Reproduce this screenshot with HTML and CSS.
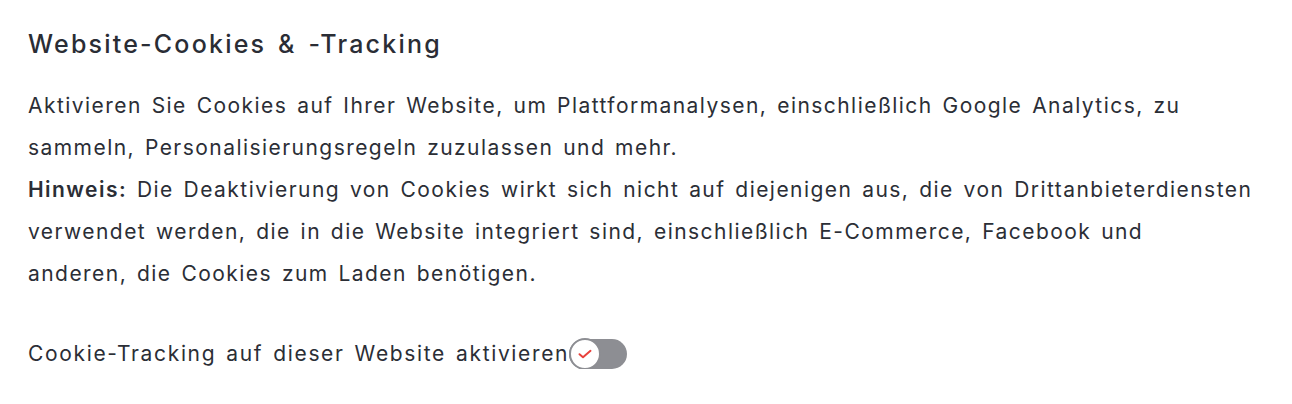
FILE: index.html
```html
<!DOCTYPE html>
<html lang="de">
<head>
<meta charset="utf-8">
<link rel="stylesheet" href="styles.css">
</head>
<body>
<main class="panel">
  <h1 class="title">Website-Cookies &amp; -Tracking</h1>
  <p class="desc">Aktivieren Sie Cookies auf Ihrer Website, um Plattformanalysen, einschließlich Google Analytics, zu sammeln, Personalisierungsregeln zuzulassen und mehr.<br><strong>Hinweis:</strong> Die Deaktivierung von Cookies wirkt sich nicht auf diejenigen aus, die von Drittanbieterdiensten verwendet werden, die in die Website integriert sind, einschließlich E-Commerce, Facebook und<br>anderen, die Cookies zum Laden benötigen.</p>
  <label class="toggle-row">
    <span class="toggle-label">Cookie-Tracking auf dieser Website aktivieren</span>
    <span class="switch">
      <span class="knob">
        <svg width="16" height="12" viewBox="0 0 16 12"><path d="M2.5 6.2 L6 9.2 L13.5 2.8" fill="none" stroke="#e8413c" stroke-width="2" stroke-linecap="round" stroke-linejoin="round"/></svg>
      </span>
    </span>
  </label>
</main>
</body>
</html>
```

FILE: styles.css
```css
html, body {
  margin: 0;
  padding: 0;
  background: #ffffff;
}
body {
  font-family: Inter, "Noto Sans", sans-serif;
  color: #2b2e36;
}
.panel {
  padding: 28px 28px 0 28px;
}
.title {
  margin: 0;
  font-size: 25px;
  font-weight: 500;
  line-height: 32px;
  letter-spacing: 2.2px;
  word-spacing: 3px;
  color: #2a2d35;
}
.desc {
  margin: 25px 0 0 0;
  font-size: 21px;
  line-height: 42px;
  letter-spacing: 1.45px;
  word-spacing: 2.5px;
}
.desc strong {
  font-weight: 600;
}
.toggle-row {
  display: flex;
  align-items: center;
  margin-top: 44px;
}
.toggle-label {
  font-size: 21px;
  line-height: 30px;
  letter-spacing: 1.65px;
  word-spacing: 2.5px;
}
.switch {
  display: inline-flex;
  align-items: center;
  width: 58px;
  height: 30px;
  border-radius: 15px;
  background: #8d8e93;
}
.knob {
  width: 32px;
  height: 32px;
  border-radius: 50%;
  background: #ffffff;
  border: 2px solid #8d8e93;
  box-sizing: border-box;
  display: flex;
  align-items: center;
  justify-content: center;
}
```
